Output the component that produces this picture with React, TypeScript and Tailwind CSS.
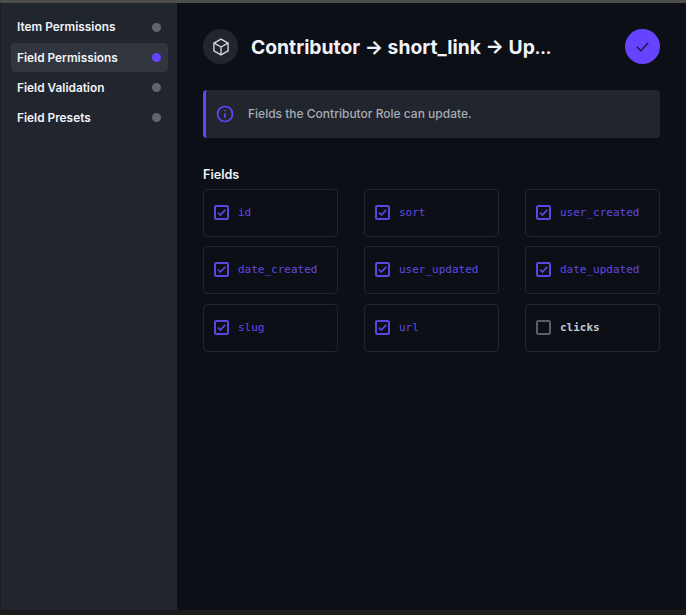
import React from "react";

const nav = [
  { label: "Item Permissions", active: false },
  { label: "Field Permissions", active: true },
  { label: "Field Validation", active: false },
  { label: "Field Presets", active: false },
];

const fields = [
  ["id", true],
  ["sort", true],
  ["user_created", true],
  ["date_created", true],
  ["user_updated", true],
  ["date_updated", true],
  ["slug", true],
  ["url", true],
  ["clicks", false],
] as [string, boolean][];

function Box({ checked }: { checked: boolean }) {
  return (
    <svg width="24" height="24" viewBox="0 0 24 24" fill="none" className="shrink-0">
      <rect x="5" y="5" width="13" height="13" rx="1.2" stroke={checked ? "#5c45e0" : "#5b5e66"} strokeWidth="2" />
      {checked && <path d="M8 11.6l2.4 2.4 4.8-5.2" stroke="#5c45e0" strokeWidth="1.7" />}
    </svg>
  );
}

export default function App() {
  return (
    <div className="h-[615px] w-[686px] overflow-hidden bg-[#1c1c1c] font-['Inter',sans-serif]">
      <div className="h-[3px] bg-[#4d4d4d]" />
      <div className="flex h-[607px] pl-px">
        <aside className="flex w-[176px] shrink-0 flex-col gap-px bg-[#21252d] pl-[10px] pr-[9px] pt-[10px]">
          {nav.map((n, i) => (
            <div
              key={n.label}
              className={`flex h-[29px] items-center justify-between rounded-[4px] pl-[6px] pr-[7px] text-[11.85px] font-semibold leading-none text-[#f0f4f9] ${
                n.active ? "bg-[#30353e]" : ""
              }`}
            >
              <span className={i > 0 ? "pt-[2px]" : ""}>{n.label}</span>
              <span className={`h-[9.5px] w-[9.5px] rounded-full ${n.active ? "bg-[#6644ff]" : "bg-[#64646e]"}`} />
            </div>
          ))}
        </aside>
        <main className="flex-1 bg-[#0c0f16] pl-[26px] pr-[26px] pt-[26px]">
          <header className="flex h-[35px] items-center">
            <div className="flex h-[35px] w-[35px] items-center justify-center rounded-full bg-[#21252d]">
              <svg width="20" height="20" viewBox="0 0 24 24" fill="none" stroke="#d3dae4" strokeWidth="1.6" strokeLinejoin="round">
                <path d="M12 2.5l8.5 4.8v9.4L12 21.5l-8.5-4.8V7.3z" />
                <path d="M3.8 7.4L12 12l8.2-4.6M12 12v9.4" />
              </svg>
            </div>
            <h1 className="ml-[13px] flex-1 whitespace-nowrap pt-[2px] text-[19.3px] font-bold leading-none text-[#f0f4f9]">
              Contributor → short_link → Up<span className="text-[16.5px]">…</span>
            </h1>
            <div className="flex h-[35px] w-[35px] items-center justify-center rounded-full bg-[#6644ff]">
              <svg width="17" height="17" viewBox="0 0 24 24" fill="none" stroke="#1a1640" strokeWidth="2">
                <path d="M4 12.5l5.5 5.5L20 7" />
              </svg>
            </div>
          </header>

          <div className="mt-[26px] flex h-[48px] items-center rounded-[4px] border-l-[3px] border-[#6644ff] bg-[#21252d] pl-[9px]">
            <svg width="20" height="20" viewBox="0 0 24 24" fill="none" stroke="#6644ff" strokeWidth="2">
              <circle cx="12" cy="12" r="9" />
              <path d="M12 11v5.5M12 7.2v1.6" />
            </svg>
            <span className="ml-[13px] text-[12px] font-medium text-[#a8acb4]">
              Fields the Contributor Role can update.
            </span>
          </div>

          <div className="mt-[28px] pt-px text-[12.6px] font-semibold leading-[16px] text-[#f0f4f9]">Fields</div>
          <div className="mt-[6px] grid grid-cols-3 gap-x-[26px] gap-y-[9.45px]">
            {fields.map(([name, checked]) => (
              <div
                key={name}
                className="flex h-[48px] items-center gap-[4px] rounded-[4px] border border-[#21252d] pl-[6px]"
              >
                <Box checked={checked} />
                <span
                  className={`font-['DejaVu_Sans_Mono',monospace] text-[11px] ${
                    checked ? "text-[#6049e6]" : "font-bold text-[#c3c8cf]"
                  }`}
                >
                  {name}
                </span>
              </div>
            ))}
          </div>
        </main>
      </div>
    </div>
  );
}
